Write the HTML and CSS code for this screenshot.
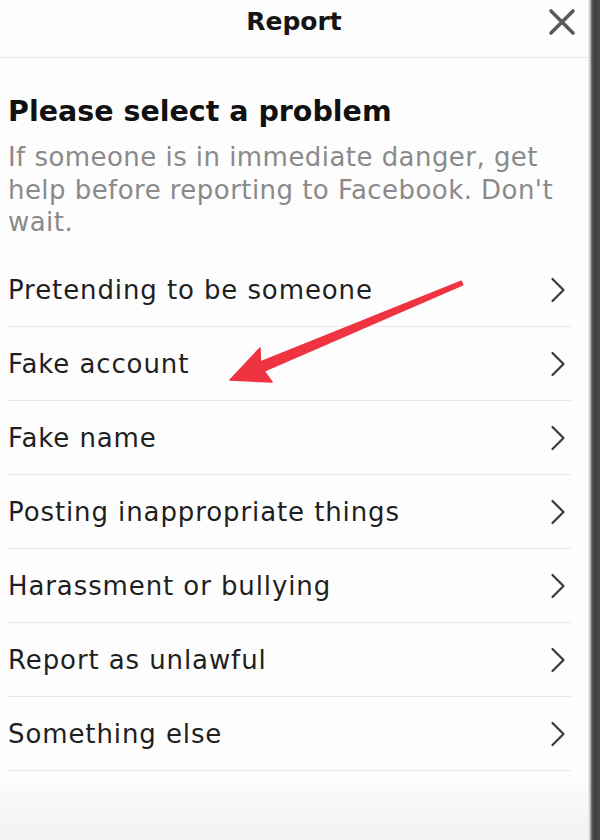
FILE: index.html
```html
<!DOCTYPE html>
<html lang="en">
<head>
<meta charset="utf-8">
<title>Report</title>
<link rel="stylesheet" href="styles.css">
</head>
<body>
<div class="screen">
  <div class="panel">
    <header class="topbar">
      <span class="title">Report</span>
      <svg class="close" viewBox="0 0 28 28" width="28" height="28" aria-label="Close">
        <path d="M3 3 L25 25 M25 3 L3 25" />
      </svg>
    </header>
    <main class="content">
      <h1 class="heading">Please select a problem</h1>
      <p class="subtitle">If someone is in immediate danger, get help before reporting to Facebook. Don't wait.</p>
      <ul class="options">
        <li class="option"><span>Pretending to be someone</span><svg class="chev" viewBox="0 0 16 26" width="16" height="26"><path d="M2.5 2 L13.5 13 L2.5 24"/></svg></li>
        <li class="option"><span>Fake account</span><svg class="chev" viewBox="0 0 16 26" width="16" height="26"><path d="M2.5 2 L13.5 13 L2.5 24"/></svg></li>
        <li class="option"><span>Fake name</span><svg class="chev" viewBox="0 0 16 26" width="16" height="26"><path d="M2.5 2 L13.5 13 L2.5 24"/></svg></li>
        <li class="option"><span>Posting inappropriate things</span><svg class="chev" viewBox="0 0 16 26" width="16" height="26"><path d="M2.5 2 L13.5 13 L2.5 24"/></svg></li>
        <li class="option"><span>Harassment or bullying</span><svg class="chev" viewBox="0 0 16 26" width="16" height="26"><path d="M2.5 2 L13.5 13 L2.5 24"/></svg></li>
        <li class="option"><span>Report as unlawful</span><svg class="chev" viewBox="0 0 16 26" width="16" height="26"><path d="M2.5 2 L13.5 13 L2.5 24"/></svg></li>
        <li class="option"><span>Something else</span><svg class="chev" viewBox="0 0 16 26" width="16" height="26"><path d="M2.5 2 L13.5 13 L2.5 24"/></svg></li>
      </ul>
    </main>
    <svg class="arrow" viewBox="0 0 590 840" width="590" height="840" aria-hidden="true">
      <polygon points="461.2,281.2 260.4,361.9 260,348 230,380 272,382 264.2,371.1 462.8,284.8" />
    </svg>
  </div>
  <div class="edge"></div>
</div>
</body>
</html>
```

FILE: styles.css
```css
* { box-sizing: border-box; }
html, body { margin: 0; padding: 0; }
body {
  width: 600px;
  height: 840px;
  overflow: hidden;
  font-family: "DejaVu Sans", "Noto Sans", "Liberation Sans", sans-serif;
  color: #1c1c1c;
  background: #fdfdfd;
}
.screen {
  display: flex;
  height: 840px;
}
.panel {
  position: relative;
  flex: 1;
  background: linear-gradient(to bottom, #fdfdfd 0, #fdfdfd 775px, #f1f1f1 840px);
}
.edge {
  width: 12px;
  background: linear-gradient(to right, #f4f4f4 0, #c8c8c8 2px, #555 4px, #3e3e3e 7px, #4a4a4a 12px);
}
.topbar {
  position: relative;
  height: 58px;
  border-bottom: 1px solid #e7e7e7;
  display: flex;
  align-items: flex-start;
  justify-content: center;
  padding-top: 4px;
}
.title {
  font-size: 25px;
  font-weight: 600;
  line-height: 36px;
  color: #151515;
}
.close {
  position: absolute;
  right: 12px;
  top: 8px;
  fill: none;
  stroke: #5a5a5a;
  stroke-width: 3.6;
  stroke-linecap: round;
}
.content {
  padding: 36px 17px 0 8px;
}
.heading {
  margin: 0;
  font-size: 28.5px;
  font-weight: 700;
  line-height: 36px;
  color: #111;
}
.subtitle {
  margin: 11px 0 0;
  font-size: 26px;
  line-height: 32.5px;
  letter-spacing: 0.45px;
  color: #8a8a8a;
}
.options {
  list-style: none;
  margin: 14px 0 0;
  padding: 0;
}
.option {
  display: flex;
  align-items: center;
  justify-content: space-between;
  height: 74px;
  padding-top: 2px;
  border-bottom: 1px solid #e8e8e8;
  font-size: 26px;
  letter-spacing: 0.9px;
  color: #1f1f1f;
}
.chev {
  margin-right: 5px;
  fill: none;
  stroke: #3a3a3a;
  stroke-width: 2.2;
  stroke-linecap: round;
  stroke-linejoin: round;
}
.arrow {
  position: absolute;
  left: 0;
  top: 0;
  pointer-events: none;
}
.arrow polygon {
  fill: #ef3340;
  stroke: #ef3340;
  stroke-width: 1.5;
  stroke-linejoin: round;
}
```
